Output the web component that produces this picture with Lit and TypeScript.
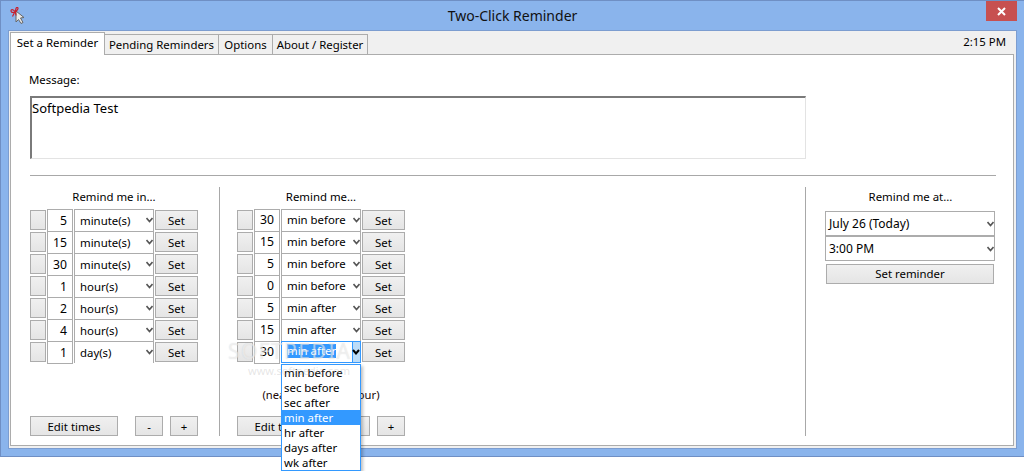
import { LitElement, html, css } from "lit";
import { customElement } from "lit/decorators.js";

const left: [string, string][] = [
  ["5", "minute(s)"], ["15", "minute(s)"], ["30", "minute(s)"], ["1", "hour(s)"],
  ["2", "hour(s)"], ["4", "hour(s)"], ["1", "day(s)"],
];
const mid: [string, string][] = [
  ["30", "min before"], ["15", "min before"], ["5", "min before"], ["0", "min before"],
  ["5", "min after"], ["15", "min after"], ["30", "min after"],
];
const menu = ["min before", "sec before", "sec after", "min after", "hr after", "days after", "wk after"];

@customElement("app-root")
export class AppRoot extends LitElement {
  static styles = css`
    :host { display: block; width: 1024px; height: 471px; background: #fff; overflow: hidden;
      font-family: "Noto Sans", "Open Sans", sans-serif; font-size: 11.4px; color: #000; }
    * { box-sizing: border-box; }
    .window { height: 457px; background: #8ab4ec; border: 1px solid #6f8fc4; border-right: 0; display: flex; flex-direction: column; position: relative; }
    .title { height: 29px; flex: none; display: flex; align-items: center; position: relative; }
    .title .icon { position: absolute; left: 9px; top: 6px; }
    .title .name { flex: 1; text-align: center; font-size: 14px; color: #111; }
    .close { position: absolute; right: 7px; top: 0; width: 31px; height: 20px; background: #c75050; display: flex; align-items: center; justify-content: center; }
    .client { flex: 1; margin: 0 7px 7px 7px; background: #f0f0f0; border: 1px solid #7c9dd0; display: flex; flex-direction: column; padding: 1px 2px 2px 1px; }
    .tabbar { display: flex; align-items: flex-end; height: 22px; flex: none; position: relative; }
    .tab { height: 20px; background: #f0f0f0; border: 1px solid #acacac; border-left: 0; border-bottom: 0; line-height: 20px; text-align: center; white-space: nowrap; flex: none; }
    .tab.first { height: 23px; width: 95px; background: #fff; border-left: 1px solid #acacac; margin-bottom: -1px; position: relative; z-index: 1; line-height: 20px; }
    .tab.t2 { width: 114px; }
    .tab.t3 { width: 54px; }
    .tab.t4 { width: 95px; }
    .clock { position: absolute; right: 8px; top: 2px; }
    .page { flex: 1; background: #fff; border: 1px solid #acacac; padding: 16px 17px 9px 19px; display: flex; flex-direction: column; min-height: 0; }
    .label { height: 17px; line-height: 17px; margin-left: -1px; }
    .msg { width: 776px; height: 63px; margin-top: 8px; border: 2px solid #7a7a7a; border-right: 1px solid #e3e3e3; border-bottom: 1px solid #e3e3e3; padding: 0; font-size: 13px; line-height: 20px; flex: none; }
    .rule { height: 1px; background: #a8a8a8; margin-top: 16px; flex: none; }
    .cols { flex: 1; display: flex; margin-top: 11px; min-height: 0; }
    .col { display: flex; flex-direction: column; }
    .col.a { width: 190px; border-right: 1px solid #a8a8a8; }
    .col.b { width: 586px; border-right: 1px solid #a8a8a8; padding-left: 17px; position: relative; }
    .col.c { flex: 1; padding-left: 19px; }
    .head { height: 22px; line-height: 20px; text-align: center; flex: none; }
    .col.a .head, .col.b .head { width: 168px; }
    .rows { display: flex; flex-direction: column; }
    .row { display: flex; height: 22px; align-items: center; }
    .btn { background: linear-gradient(#f0f0f0, #e5e5e5); border: 1px solid #acacac; height: 20px; display: flex; align-items: center; justify-content: center; flex: none; }
    .blank { width: 16px; margin-right: 1px; }
    .num { width: 26px; height: 23px; background: #fff; border: 1px solid #acacac; margin-right: 1px; text-align: right; padding-right: 5px; line-height: 21px; font-size: 12.2px; flex: none; margin-bottom: -1px; }
    .sel { width: 80px; height: 22px; border: 1px solid #acacac; border-bottom: 0; padding-left: 5px; line-height: 21px; position: relative; flex: none; }
    .col.b .num, .col.b .sel { line-height: 19px; }
    .arrow { position: absolute; right: 0; top: 7px; }
    .set { width: 43px; margin-left: 1px; }
    .sel.open { border: 1px solid #3399ff; padding: 2px 0 0 5px; line-height: 14px; }
    .hl { display: block; width: max-content; background: #3399ff; color: #fff; line-height: 14px; height: 14px; white-space: nowrap; }
    .drop { position: absolute; right: 0; top: 0; width: 8px; height: 20px; background: #bcdcf8; border-left: 1px solid #3399ff; }
    .note { margin-top: 23px; width: 168px; text-align: center; color: #200808; height: 18px; line-height: 18px; white-space: nowrap; font-size: 11.2px; }
    .spacer { flex: 1; }
    .foot { display: flex; height: 20px; width: 168px; }
    .edit { width: 88px; }
    .pm { width: 28px; }
    .pm.m { margin-left: 17px; }
    .pm.p { margin-left: 7px; }
    .list { position: absolute; left: 61px; top: 177px; width: 80px; height: 107px; background: #fff; border: 1px solid #3399ff; z-index: 5; box-shadow: 2px 2px 3px rgba(0,0,0,.25); }
    .list div { height: 15px; line-height: 15px; padding-left: 2px; }
    .list .on { background: #3399ff; color: #fff; }
    .big { width: 170px; height: 25px; border: 1px solid #acacac; padding-left: 3px; line-height: 23px; position: relative; font-size: 12px; background: #fff; }
    .big.firstbig { margin-top: 2px; }
    .big .arrow { top: 9px; }
    .setr { width: 168px; margin: 3px 0 0 1px; padding-bottom: 2px; }
    .wm { position: absolute; left: 8px; top: 150px; font-size: 21px; letter-spacing: 1.4px; color: rgba(255,255,255,.5); text-shadow: 0 0 1px rgba(140,140,140,.3); white-space: nowrap; pointer-events: none; z-index: 3; }
    .wm2 { position: absolute; left: 28px; top: 176px; font-size: 11px; color: rgba(170,170,170,.3); white-space: nowrap; pointer-events: none; z-index: 6; }
  `;

  private arrow() {
    return html`<svg class="arrow" width="7" height="6" viewBox="0 0 7 6"><path d="M0.5 1 L3.5 4.5 L6.5 1" fill="none" stroke="#555" stroke-width="1.6"/></svg>`;
  }

  private row(n: string, s: string, open = false) {
    return html`<div class="row">
      <div class="btn blank"></div>
      <div class="num">${n}</div>
      <div class="sel ${open ? "open" : ""}">
        ${open ? html`<span class="hl">${s}</span><div class="drop"></div><svg class="arrow" width="8" height="6" viewBox="0 0 8 6"><path d="M1 1 L4 4.5 L7 1" fill="none" stroke="#000" stroke-width="2"/></svg>` : html`${s}${this.arrow()}`}
      </div>
      <div class="btn set">Set</div>
    </div>`;
  }

  render() {
    return html`<div class="window">
      <div class="title">
        <svg class="icon" width="18" height="18" viewBox="0 0 18 18">
          <path d="M6 4 L6 15 L8.5 12.5 L11 16.5 L13 15.5 L10.5 11 L14 10.5 Z" fill="#e8e8e8" stroke="#666" stroke-width="1"/>
          <path d="M5.5 5 C2 0.5 0 3.5 1.5 5 C3 6 5 5 5.5 5 C7 3.5 9 1 7.5 0.5 C6 0 5.5 2.5 5.5 5 M4.5 5.5 L2.5 9.5 M5.5 5.5 L6 8.5" fill="none" stroke="#c8202c" stroke-width="1.2"/>
        </svg>
        <div class="name">Two-Click Reminder</div>
        <div class="close"><svg width="9" height="9" viewBox="0 0 9 9"><path d="M1 1 L8 8 M8 1 L1 8" stroke="#fff" stroke-width="2"/></svg></div>
      </div>
      <div class="client">
        <div class="tabbar">
          <div class="tab first">Set a Reminder</div>
          <div class="tab t2">Pending Reminders</div>
          <div class="tab t3">Options</div>
          <div class="tab t4">About / Register</div>
          <div class="clock">2:15 PM</div>
        </div>
        <div class="page">
          <div class="label">Message:</div>
          <div class="msg">Softpedia Test</div>
          <div class="rule"></div>
          <div class="cols">
            <div class="col a">
              <div class="head">Remind me in...</div>
              <div class="rows">${left.map(([n, s]) => this.row(n, s))}</div>
              <div class="spacer"></div>
              <div class="foot">
                <div class="btn edit">Edit times</div>
                <div class="btn pm m">-</div>
                <div class="btn pm p">+</div>
              </div>
            </div>
            <div class="col b">
              <div class="head">Remind me...</div>
              <div class="rows">${mid.map(([n, s], i) => this.row(n, s, i === 6))}</div>
              <div class="note">(nearest quarter hour)</div>
              <div class="spacer"></div>
              <div class="foot">
                <div class="btn edit">Edit times</div>
                <div class="btn pm m">-</div>
                <div class="btn pm p">+</div>
              </div>
              <div class="wm">SOFTPEDIA</div>
              <div class="wm2">www.softpedia.com</div>
              <div class="list">${menu.map((m, i) => html`<div class="${i === 3 ? "on" : ""}">${m}</div>`)}</div>
            </div>
            <div class="col c">
              <div class="head">Remind me at...</div>
              <div class="big firstbig">July 26 (Today)${this.arrow()}</div>
              <div class="big">3:00 PM${this.arrow()}</div>
              <div class="btn setr">Set reminder</div>
            </div>
          </div>
        </div>
      </div>
    </div>`;
  }
}
